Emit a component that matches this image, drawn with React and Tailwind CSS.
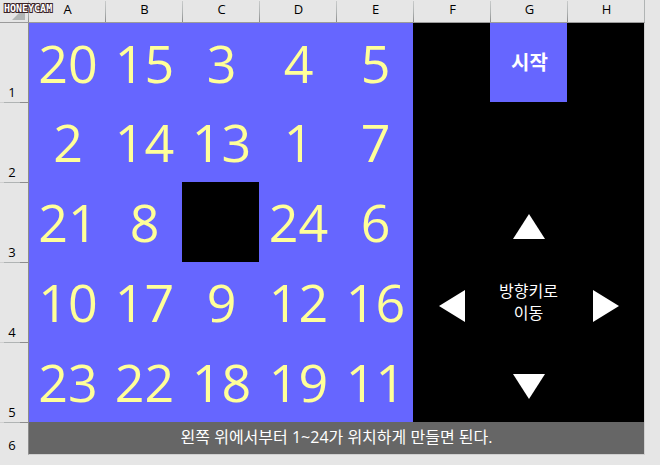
const COLUMNS = ['A', 'B', 'C', 'D', 'E', 'F', 'G', 'H'];

const ROWS = [
  [20, 15, 3, 4, 5],
  [2, 14, 13, 1, 7],
  [21, 8, null, 24, 6],
  [10, 17, 9, 12, 16],
  [23, 22, 18, 19, 11],
];

const ARROWS = {
  up: { label: '위', width: 32, height: 25, points: '16,0 32,25 0,25' },
  down: { label: '아래', width: 32, height: 25, points: '0,0 32,0 16,25' },
  left: { label: '왼쪽', width: 26, height: 32, points: '0,16 26,0 26,32' },
  right: { label: '오른쪽', width: 26, height: 32, points: '0,0 26,16 0,32' },
};

function Arrow({ direction }) {
  const { label, width, height, points } = ARROWS[direction];
  return (
    <button type="button" aria-label={label} className="flex h-full w-full items-center justify-center pt-2">
      <svg width={width} height={height} viewBox={`0 0 ${width} ${height}`} fill="white" aria-hidden="true">
        <polygon points={points} />
      </svg>
    </button>
  );
}

const CONTROLS = [
  [null, <button type="button" className="h-full w-full bg-[#6666ff] pl-0.5 text-[20px] font-bold">시작</button>, null],
  [null, null, null],
  [null, <Arrow direction="up" />, null],
  [
    <Arrow direction="left" />,
    <p className="text-center text-[16px] leading-[22px] whitespace-nowrap">
      방향키로
      <br />
      이동
    </p>,
    <Arrow direction="right" />,
  ],
  [null, <Arrow direction="down" />, null],
];

function RowHeader({ number }) {
  return (
    <th
      scope="row"
      className={`bg-[linear-gradient(to_right,#d0d0d0_4px,#b0b4b4_4px,#b0b4b4_20px,#8c8c8c_20px)] bg-[length:100%_1px] bg-no-repeat p-0 pr-1 pb-0.5 text-center align-bottom text-[13px] leading-4 font-normal ${
        number === 1 ? 'bg-none' : ''
      }`}
    >
      {number}
    </th>
  );
}

function Watermark() {
  return (
    <span className="absolute top-1 left-1 font-['DejaVu_Sans_Mono',monospace] text-[10px] leading-[10px] font-bold text-white [paint-order:stroke_fill] [-webkit-text-stroke:2px_#3b2428]">
      HONEYCAM
    </span>
  );
}

export default function App() {
  return (
    <main className="relative min-h-screen bg-[#e6e6e6] pr-[15px] font-['Open_Sans','Noto_Sans_CJK_KR',sans-serif] text-black">
      <table className="w-full table-fixed border-separate border-spacing-0">
        <colgroup>
          <col className="w-7" />
          {COLUMNS.map((name) => (
            <col key={name} />
          ))}
          <col className="w-px" />
        </colgroup>
        <thead>
          <tr className="h-[23px]">
            <td className="border-b border-[#9b9b9b] p-0 pt-1">
              <svg className="ml-3" width="13" height="13" viewBox="0 0 13 13" aria-hidden="true">
                <path d="M13 0V13H0Z" fill="#b1b5b4" />
              </svg>
            </td>
            {COLUMNS.map((name) => (
              <th
                key={name}
                scope="col"
                className="border-b border-[#9b9b9b] bg-[linear-gradient(to_bottom,#e6e6e6_1px,#c8caca_1px,#b0b4b4_12px,#8c8c8c_22px)] bg-[length:1px_100%] bg-no-repeat p-0 pb-1 pl-0.5 text-[13px] leading-[18px] font-normal"
              >
                {name}
              </th>
            ))}
            <td className="border-b border-[#9b9b9b] bg-[#b0b4b4] p-0" />
          </tr>
        </thead>
        <tbody>
          {ROWS.map((tiles, row) => (
            <tr key={row} className={row === 0 ? 'h-[79px]' : 'h-20'}>
              <RowHeader number={row + 1} />
              {tiles.map((tile, col) => (
                <td
                  key={col}
                  className={`p-0 pl-0.5 text-center align-middle text-[52px] leading-[70px] text-[#ffff99] ${
                    tile === null ? 'bg-black' : 'bg-[#6666ff]'
                  } ${col === 0 ? 'border-l border-[#8c8c8c]' : ''}`}
                >
                  {tile}
                </td>
              ))}
              {CONTROLS[row].map((control, col) => (
                <td key={col} className="h-px bg-black p-0 align-middle text-white">
                  {control}
                </td>
              ))}
              <td className="bg-[#d0d0d0] p-0" />
            </tr>
          ))}
          <tr className="h-[33px]">
            <RowHeader number={6} />
            <td
              colSpan={8}
              className="border-b border-l border-b-[#d0d0d0] border-l-[#8c8c8c] bg-[#666666] p-0 pb-0.5 text-center text-[16px] leading-6 text-white"
            >
              왼쪽 위에서부터 1~24가 위치하게 만들면 된다.
            </td>
            <td className="bg-[#d0d0d0] p-0" />
          </tr>
        </tbody>
      </table>
      <Watermark />
    </main>
  );
}
